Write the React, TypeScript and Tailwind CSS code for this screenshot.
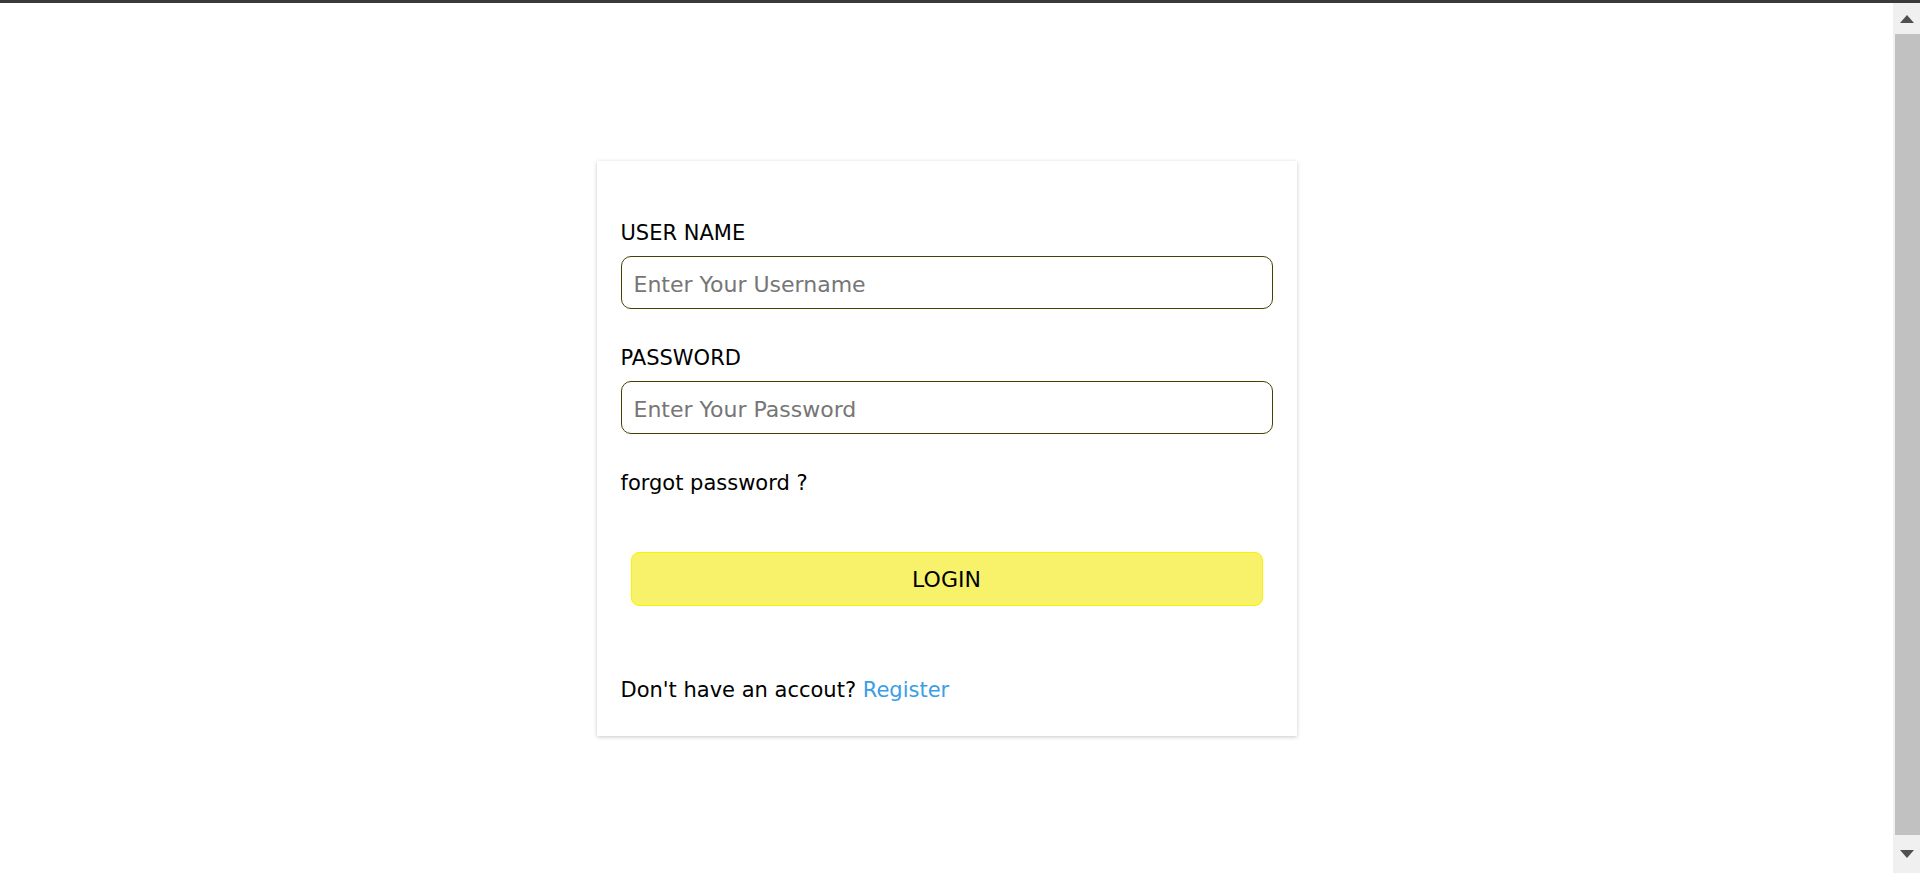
import React from "react";

export default function App() {
  return (
    <div className="h-[873px] w-full overflow-hidden flex flex-col bg-white font-['DejaVu_Sans',Verdana,sans-serif] text-black">
      <div className="h-[3px] w-full bg-[#3a3a3a]" />
      <div className="flex flex-1">
        <main className="flex-1 flex justify-center pt-[158px]">
          <div className="w-[700px] h-[575px] bg-white shadow-[0_1px_4px_rgba(0,0,0,0.22)] px-[24px] pt-[60px] pb-[34px] flex flex-col">
            <label className="text-[21px] leading-[24px]">USER NAME</label>
            <input
              type="text"
              placeholder="Enter Your Username"
              className="mt-[11px] h-[53px] w-full rounded-[10px] border border-[#454200] px-[12px] pt-[3px] text-[22px] placeholder:text-[#767676] outline-none"
            />
            <label className="mt-[37px] text-[21px] leading-[24px]">PASSWORD</label>
            <input
              type="password"
              placeholder="Enter Your Password"
              className="mt-[11px] h-[53px] w-full rounded-[10px] border border-[#454200] px-[12px] pt-[3px] text-[22px] placeholder:text-[#767676] outline-none"
            />
            <p className="mt-[37px] text-[21px] leading-[24px]">forgot password ?</p>
            <button
              type="button"
              className="mt-[57px] mx-[10px] h-[54px] rounded-[8px] bg-[#f8f26a] border border-[#fbf200] text-[22px]"
            >
              LOGIN
            </button>
            <p className="mt-[72px] text-[21px] leading-[24px]">
              Don't have an accout? <span className="text-[#3a9ee6]">Register</span>
            </p>
          </div>
        </main>
        <div className="w-[27px] bg-[#f0f0f0] flex flex-col items-stretch">
          <div className="h-[31px] flex items-center justify-center">
            <svg width="14" height="8" viewBox="0 0 14 8">
              <polygon points="7,0 14,8 0,8" fill="#505050" />
            </svg>
          </div>
          <div className="flex-1 ml-[2px] bg-[#c1c1c1]" />
          <div className="h-[38px] flex items-center justify-center">
            <svg width="14" height="8" viewBox="0 0 14 8">
              <polygon points="0,0 14,0 7,8" fill="#505050" />
            </svg>
          </div>
        </div>
      </div>
    </div>
  );
}
